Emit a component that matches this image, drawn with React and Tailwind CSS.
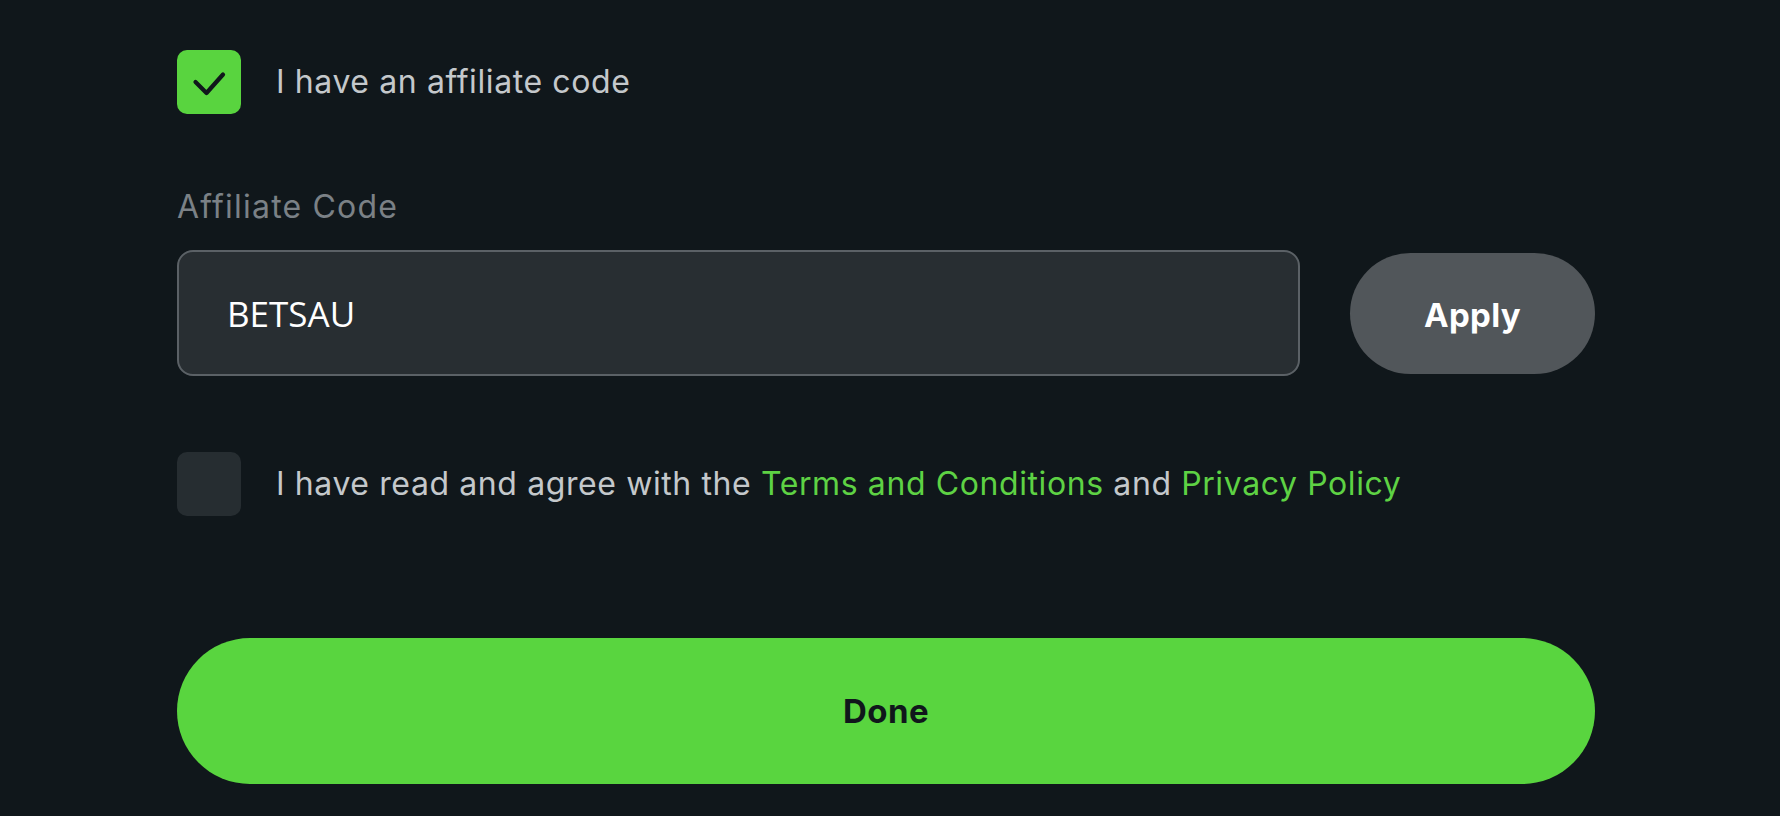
export default function App() {
  return (
    <div className="w-[1780px] h-[816px] bg-[#10171b] overflow-hidden" style={{ fontFamily: "Inter, 'Noto Sans', sans-serif" }}>
      <div className="flex flex-col pl-[177px] pt-[50px]">
        <div className="flex items-center h-16">
          <div className="w-16 h-16 rounded-[10px] bg-[#59d43f] flex items-center justify-center">
            <svg width="64" height="64" viewBox="0 0 64 64" fill="none">
              <path d="M18.5 32 L29.5 43 L46 24.5" stroke="#10171b" strokeWidth="4.2" strokeLinecap="round" strokeLinejoin="round" />
            </svg>
          </div>
          <span className="ml-[35px] text-[32px] text-[#c4c8cb] tracking-[0.6px]">I have an affiliate code</span>
        </div>

        <div className="mt-[73px] h-10 flex items-center text-[32px] text-[#7b8186] tracking-[1.2px]">Affiliate Code</div>

        <div className="mt-[23px] flex items-center">
          <div className="w-[1123px] h-[126px] rounded-[16px] border-2 border-[#5b6166] bg-[#282e32] flex items-center pl-[48px]">
            <span className="text-[35px] text-white pt-[2px]" style={{ fontFamily: "'Open Sans', 'Noto Sans', sans-serif" }}>BETSAU</span>
          </div>
          <button className="ml-[50px] w-[245px] h-[121px] rounded-full bg-[#51565a] text-white text-[33px] font-bold tracking-[0.3px] pt-[6px]">Apply</button>
        </div>

        <div className="mt-[76px] flex items-center h-16">
          <div className="w-16 h-16 rounded-[10px] bg-[#262d31]"></div>
          <span className="ml-[35px] text-[32px] text-[#c4c8cb] tracking-[0.6px]">
            I have read and agree with the <span className="text-[#5ed244]">Terms and Conditions</span> and <span className="text-[#5ed244]">Privacy Policy</span>
          </span>
        </div>

        <button className="mt-[122px] w-[1418px] h-[146px] rounded-full bg-[#59d53f] text-[#10171b] text-[33px] font-bold tracking-[0.4px] pt-[2px]">Done</button>
      </div>
    </div>
  );
}
